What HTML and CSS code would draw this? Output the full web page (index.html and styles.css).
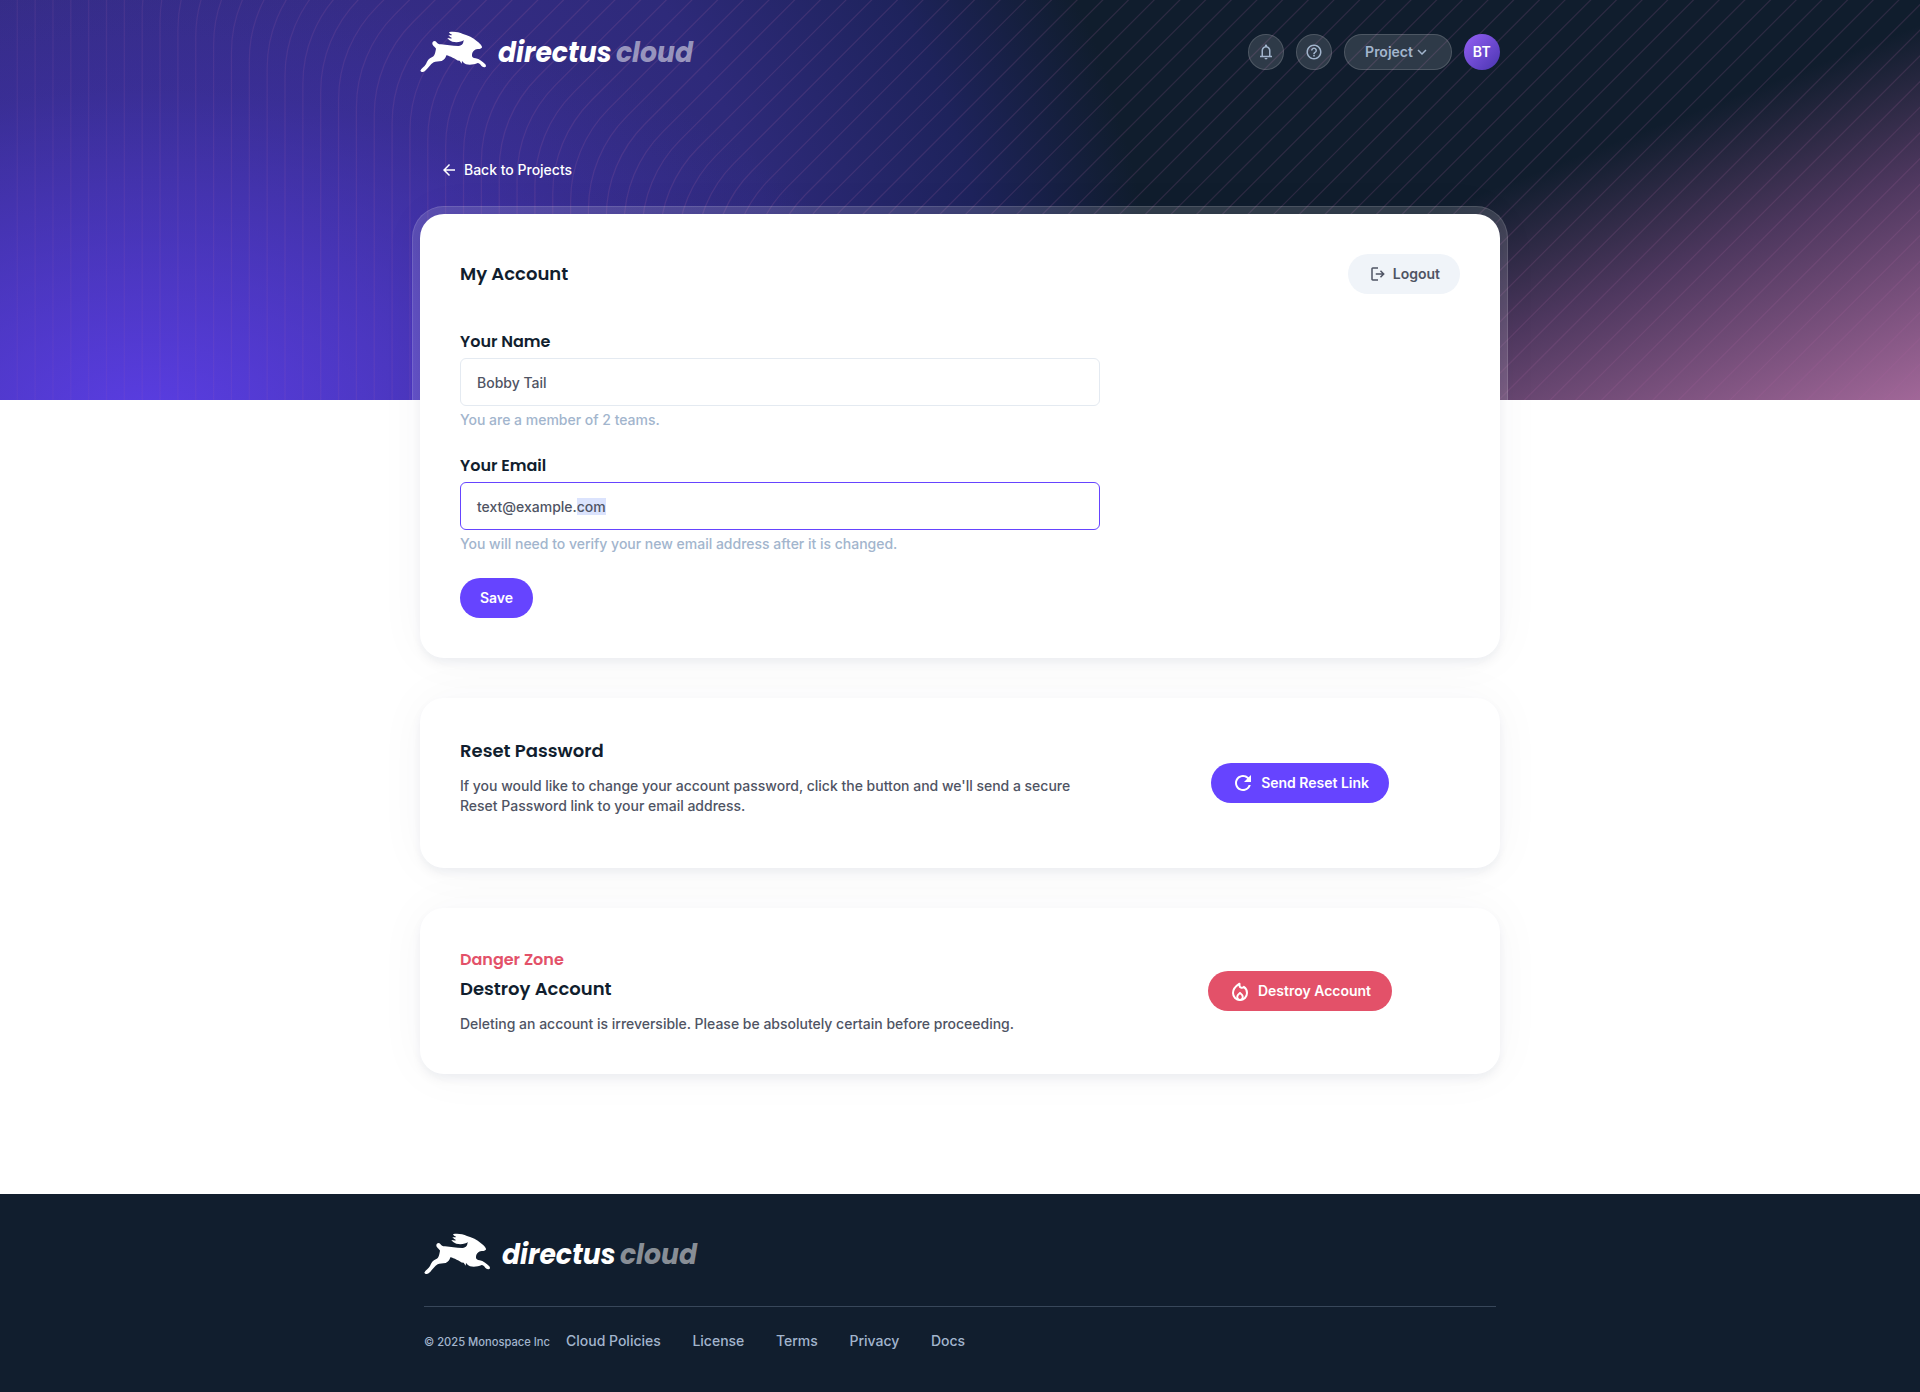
FILE: index.html
```html
<!DOCTYPE html>
<html lang="en">
<head>
<meta charset="utf-8">
<title>My Account</title>
<link rel="stylesheet" href="styles.css">
</head>
<body>
<div class="hero">
  <svg class="waves" viewBox="0 0 1920 400" width="1920" height="400">
    <defs>
      <linearGradient id="fade" gradientUnits="userSpaceOnUse" x1="0" y1="400" x2="520" y2="0">
        <stop offset="0" stop-color="#b868b0" stop-opacity=".07"/>
        <stop offset="1" stop-color="#a8609c" stop-opacity=".19"/>
      </linearGradient>
    </defs>
    <path id="waves" stroke="url(#fade)"/>
  </svg>
  <div class="ring"></div>
</div>

<div class="page">
  <header class="topbar">
    <svg class="logo" viewBox="30 24 822 120" role="img" aria-label="directus cloud">
      <path id="rabbit" d="M117 25 C128 22 146 24 159 30 C174 34 190 42 200 51 C208 56 217 66 216 70 C214 76 204 75 198 76 C191 80 186 85 186 92 C185 99 189 102 197 103 C208 105 217 113 226 121 C230 127 228 131 220 129 C213 128 212 118 203 117 C193 122 179 123 168 121 C162 118 159 114 156 111 L155 119 L149 110 C140 110 136 103 128 101 C121 98 115 95 109 94 C107 102 104 107 95 111 C86 113 77 112 71 115 C61 121 54 134 44 142 C39 145 33 144 31 140 C34 133 43 129 48 120 C52 111 56 103 67 99 C75 95 76 84 78 74 C76 69 66 65 67 57 C68 51 75 48 79 54 C82 59 86 61 93 61 C110 63 126 66 145 66 C158 65 160 57 161 48 C156 54 139 56 127 53 C121 51 116 47 112 42 C117 43 122 44 127 43 C122 40 117 36 115 33 C119 34 123 34 127 33 C122 31 118 28 117 25 Z"/>
      <text class="logo-text" x="264" y="115" textLength="341" lengthAdjust="spacingAndGlyphs">directus</text>
      <text class="logo-text faded" x="618" y="115" textLength="231" lengthAdjust="spacingAndGlyphs">cloud</text>
    </svg>
    <nav class="actions">
      <button class="round"><svg class="i18" viewBox="0 0 24 24"><path d="M4 19v-2h2v-7q0-2.075 1.25-3.687T10.500 4.200v-.7q0-.625.438-1.062T12 2t1.063.438T13.500 3.500v.7q2 .5 3.250 2.113T18 10v7h2v2zm8 3q-.825 0-1.412-.587T10 20h4q0 .825-.587 1.413T12 22m-4-5h8v-7q0-1.650-1.175-2.825T12 6 9.175 7.175 8 10z"/></svg></button>
      <button class="round"><svg class="i18" viewBox="0 0 24 24"><path d="M11 18h2v-2h-2v2zm1-16C6.480 2 2 6.480 2 12s4.480 10 10 10 10-4.480 10-10S17.520 2 12 2zm0 18c-4.410 0-8-3.590-8-8s3.590-8 8-8 8 3.590 8 8-3.590 8-8 8zm0-14c-2.210 0-4 1.790-4 4h2c0-1.100.9-2 2-2s2 .9 2 2c0 2-3 1.750-3 5h2c0-2.250 3-2.500 3-5 0-2.210-1.790-4-4-4z"/></svg></button>
      <button class="project">Project<svg class="i18" viewBox="0 0 24 24"><path d="M16.590 8.590 12 13.170 7.410 8.590 6 10l6 6 6-6z"/></svg></button>
      <span class="avatar">BT</span>
    </nav>
  </header>

  <a class="back"><svg class="i18" viewBox="0 0 24 24"><path d="M20 11H7.830l5.590-5.590L12 4l-8 8 8 8 1.410-1.410L7.830 13H20v-2z"/></svg><span>Back to Projects</span></a>

  <main class="cards">
    <section class="card account">
      <div class="card-head">
        <h1 class="title">My Account</h1>
        <button class="btn btn-grey"><svg class="i18" viewBox="0 0 24 24"><path d="M5 21q-.825 0-1.412-.587T3 19V5q0-.825.588-1.412T5 3h7v2H5v14h7v2zm11-4-1.375-1.450 2.550-2.550H9v-2h8.175l-2.550-2.550L16 7l5 5z"/></svg><span>Logout</span></button>
      </div>
      <div class="field">
        <label class="label">Your Name</label>
        <div class="input">Bobby Tail</div>
        <p class="hint">You are a member of 2 teams.</p>
      </div>
      <div class="field">
        <label class="label">Your Email</label>
        <div class="input input-focus"><span>text@example.<span class="selected">com</span></span></div>
        <p class="hint">You will need to verify your new email address after it is changed.</p>
      </div>
      <button class="btn btn-save">Save</button>
    </section>

    <section class="card split reset">
      <div>
        <h2 class="title">Reset Password</h2>
        <p class="desc">If you would like to change your account password, click the button and we'll send a secure Reset Password link to your email address.</p>
      </div>
      <button class="btn btn-primary"><svg class="i24" viewBox="0 0 24 24"><path d="M17.650 6.350A7.958 7.958 0 0 0 12 4c-4.420 0-7.990 3.580-7.990 8s3.570 8 7.990 8c3.730 0 6.840-2.550 7.730-6h-2.080A5.990 5.990 0 0 1 12 18c-3.310 0-6-2.690-6-6s2.690-6 6-6c1.660 0 3.140.69 4.220 1.780L13 11h7V4l-2.350 2.350z"/></svg><span>Send Reset Link</span></button>
    </section>

    <section class="card split danger">
      <div>
        <p class="eyebrow">Danger Zone</p>
        <h2 class="title">Destroy Account</h2>
        <p class="desc">Deleting an account is irreversible. Please be absolutely certain before proceeding.</p>
      </div>
      <button class="btn btn-danger"><svg class="i24" viewBox="0 0 24 24"><path class="line" d="M11.500 4.700C8.300 6.800 5 10.300 5 14a7 7 0 0 0 14 0c0-2.600-1.200-4.800-3.200-6.100-1.800 1.700-4.300.6-4.300-1.500z"/><path class="line" d="M12 13.900l-2 2c-1.300 1.400-1 4.900 2 5.100 3-.2 3.300-3.700 2-5.100z"/></svg><span>Destroy Account</span></button>
    </section>
  </main>
</div>

<footer class="footer">
  <div class="footer-inner">
    <svg class="logo" viewBox="30 24 822 120" role="img" aria-label="directus cloud">
      <use href="#rabbit"/>
      <text class="logo-text" x="264" y="115" textLength="341" lengthAdjust="spacingAndGlyphs">directus</text>
      <text class="logo-text faded" x="618" y="115" textLength="231" lengthAdjust="spacingAndGlyphs">cloud</text>
    </svg>
    <div class="footer-row">
      <span class="copy">© 2025 Monospace Inc</span>
      <nav class="links"><a>Cloud Policies</a><a>License</a><a>Terms</a><a>Privacy</a><a>Docs</a></nav>
    </div>
  </div>
</footer>
<script src="waves.js"></script>
</body>
</html>
```
FILE: styles.css
```css
* { box-sizing: border-box; }
body { margin: 0; background: #fff; color: #4f5464; font: 500 14px/20px Inter, sans-serif; letter-spacing: -.01px; position: relative; }
h1, h2, p { margin: 0; }
button { font: inherit; letter-spacing: inherit; border: 0; padding: 0; }
svg { fill: currentColor; flex: none; display: block; }
.i18 { width: 18px; height: 18px; }
.i24 { width: 24px; height: 24px; }
.line { fill: none; stroke: currentColor; stroke-width: 2; stroke-linejoin: round; }

.hero {
  position: absolute; top: 0; left: 0; right: 0; height: 400px; overflow: hidden; z-index: -1;
  background:
    radial-gradient(760px 440px at 150px 420px, rgba(96, 64, 240, .85), rgba(86, 60, 220, .58) 40%, rgba(70, 52, 190, .22) 75%, rgba(60, 48, 170, 0)),
    radial-gradient(1020px 1020px at 140px 400px, #392e94 0, #352c85 45%, #2e2a7a 64%, #1e235c 84%, rgba(26, 33, 84, 0) 100%),
    linear-gradient(159deg, rgba(160, 102, 152, 0) 67%, #4d375e 80%, #a16798 100%),
    #101d2d;
}
.waves { position: absolute; top: 0; left: 0; }
.waves path { fill: none; stroke-width: 1.200; }
.ring { position: relative; width: 1096px; height: 460px; margin: 206px auto 0; border: 1px solid rgba(255, 255, 255, .12); border-radius: 32px; background: rgba(255, 255, 255, .14); }

.page { width: 1080px; margin: 0 auto; padding: 32px 0 120px; }
.topbar { display: flex; justify-content: space-between; align-items: center; height: 40px; }
.logo { width: 274px; height: 40px; color: #fff; overflow: visible; }
.logo-text { font: italic 700 86px Poppins, Lato, sans-serif; letter-spacing: 0; fill: #fff; }
.faded { fill-opacity: .52; }
.actions { display: flex; gap: 12px; color: #a2b5cd; }
.actions button { height: 36px; border: 1px solid rgba(255, 255, 255, .15); background: rgba(255, 255, 255, .13); color: inherit; border-radius: 18px; display: flex; align-items: center; justify-content: center; }
.actions .round { width: 36px; }
.actions .project { width: 108px; font-weight: 600; }
.avatar { width: 36px; height: 36px; border-radius: 50%; background: linear-gradient(135deg, #9460f4, #4a35b0); color: #fff; font-weight: 600; letter-spacing: .3px; display: flex; align-items: center; justify-content: center; }
.back { display: flex; align-items: center; gap: 6px; width: max-content; margin: 88px 0 0 20px; color: #fff; }

.cards { display: flex; flex-direction: column; gap: 40px; margin-top: 34px; }
.card { background: #fff; border-radius: 24px; padding: 40px; box-shadow: 0 5px 10px rgba(23, 41, 64, .06), 0 0 50px rgba(23, 41, 64, .04); }
.card-head { display: flex; justify-content: space-between; align-items: center; margin-bottom: 36px; }
.title { font: 600 18px/26px Poppins, Inter, sans-serif; color: #111e2e; letter-spacing: 0; }
.label, .eyebrow { display: block; font: 600 16px/24px Poppins, Inter, sans-serif; color: #111e2e; margin-bottom: 4px; letter-spacing: 0; }
.eyebrow { color: #e35169; }
.field { width: 640px; margin-bottom: 24px; }
.input { height: 48px; border: 1px solid #e4eaf1; border-radius: 6px; padding: 2px 16px 0; display: flex; align-items: center; }
.input-focus { border-color: #6644ff; }
.selected { background: #dbe3fd; }
.hint { color: #a2b5cd; margin-top: 4px; }
.btn { height: 40px; border-radius: 20px; padding: 0 20px; font-weight: 600; white-space: nowrap; color: #fff; display: flex; align-items: center; justify-content: flex-end; gap: 6px; }
.btn-grey { width: 112px; background: #f0f4f9; color: #4f5464; }
.btn-save { width: 73px; background: #6644ff; }
.btn-primary { width: 178px; background: #6644ff; }
.btn-danger { width: 184px; padding-right: 21px; background: #e35169; }
.split { display: grid; grid-template-columns: 640px 320px; gap: 40px; align-items: center; justify-items: center; }
.split > div { width: 640px; }
.split .title { margin-bottom: 12px; }
.reset { height: 170px; }
.reset .desc { margin-bottom: 12px; }

.footer { background: #111e2e; height: 198px; padding-top: 40px; }
.footer-inner { width: 1072px; margin: 0 auto; color: #a2b5cd; }
.footer-row { display: flex; align-items: baseline; gap: 16px; margin-top: 32px; padding-top: 24px; border-top: 1px solid #38475a; }
.copy { font-size: 11.200px; }
.links { display: flex; gap: 31.700px; }
```
FILE: waves.js
```js
// Parallel lines that rise vertically and bend 45 degrees to the right.
const radius = 131;
let d = "";
for (let k = -14; k < 82; k++) {
  const x = 249.3 + 17.85 * k;
  const bend = 60.3 + 7.83 * k;
  d += `M${x} 1100V${bend}a${radius} ${radius} 0 0 1 ${radius * 0.2929} ${-radius * 0.7071}l900-900`;
}
document.getElementById("waves").setAttribute("d", d);
```
